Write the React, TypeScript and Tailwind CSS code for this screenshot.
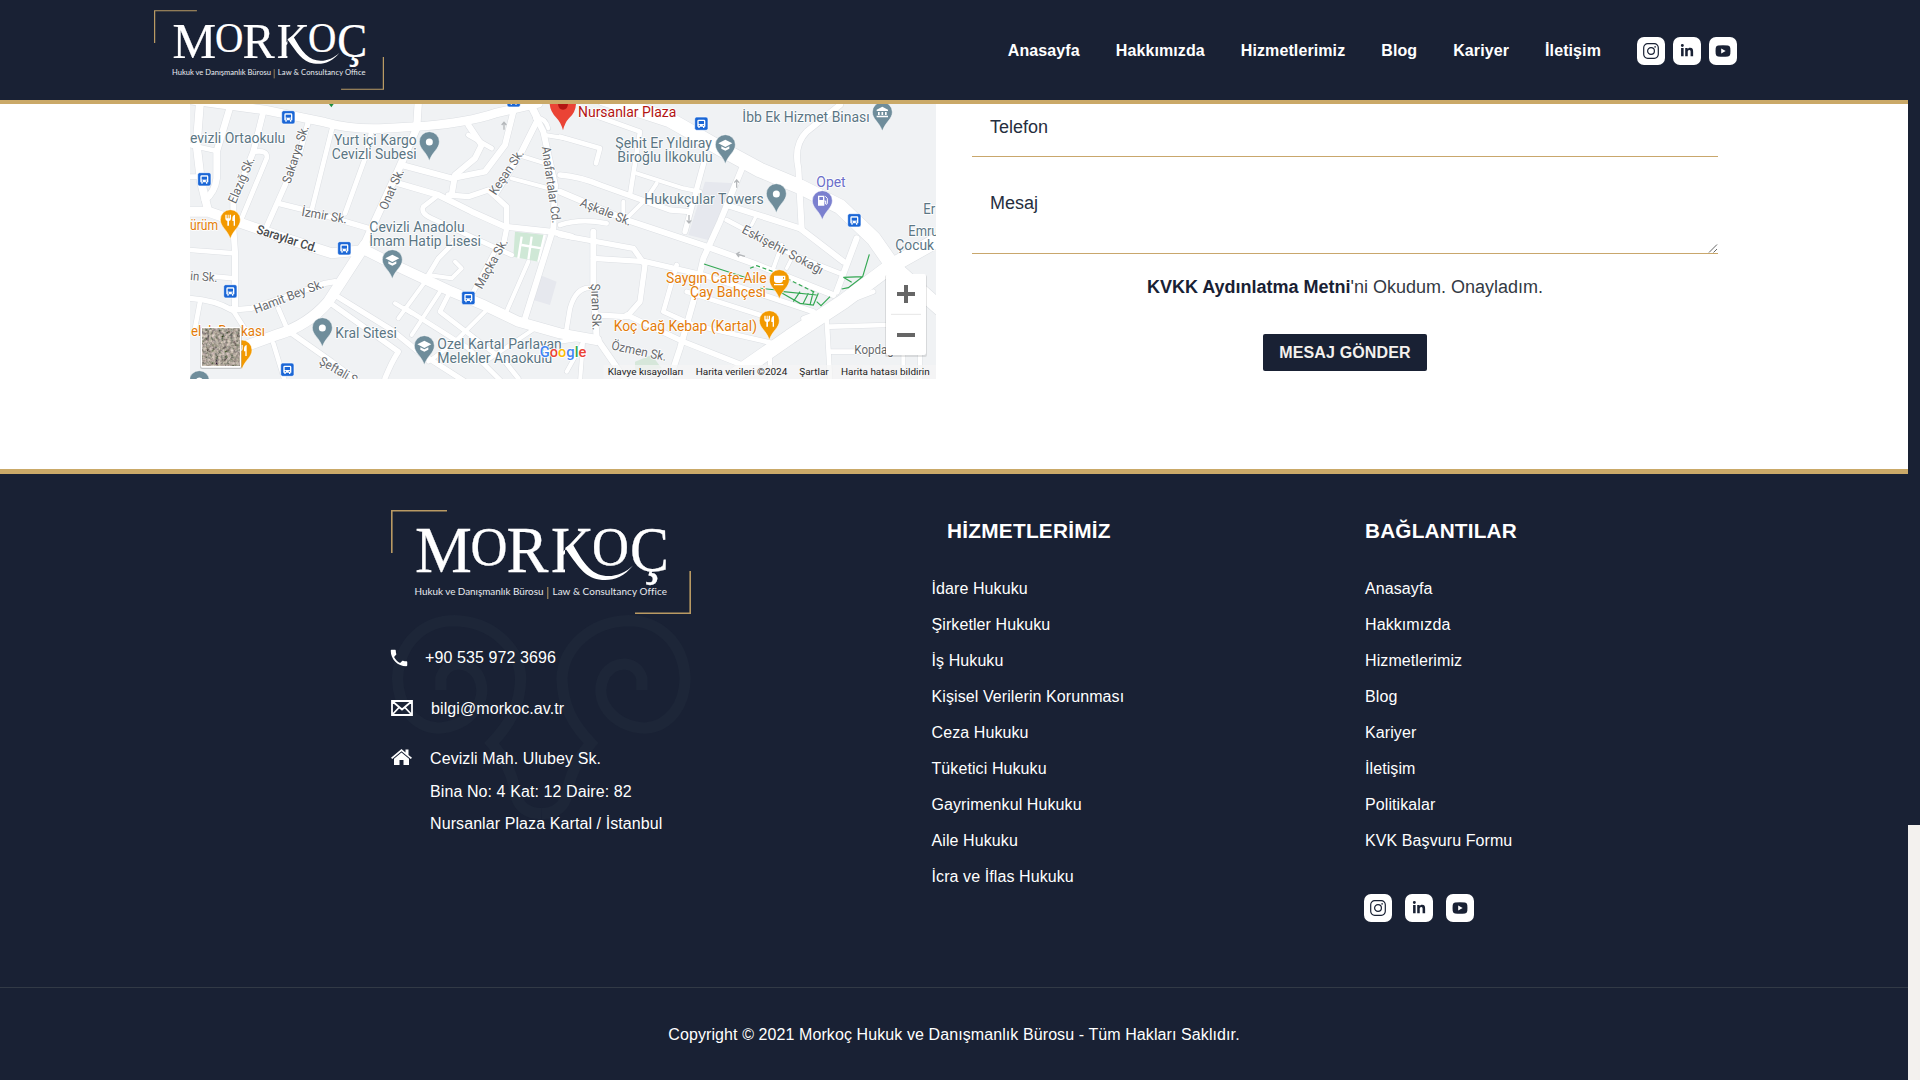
import React from "react";
import { FaLinkedinIn } from "react-icons/fa";
import { MdPhone } from "react-icons/md";

const navItems = ["Anasayfa", "Hakkımızda", "Hizmetlerimiz", "Blog", "Kariyer", "İletişim"];

const services = [
  "İdare Hukuku",
  "Şirketler Hukuku",
  "İş Hukuku",
  "Kişisel Verilerin Korunması",
  "Ceza Hukuku",
  "Tüketici Hukuku",
  "Gayrimenkul Hukuku",
  "Aile Hukuku",
  "İcra ve İflas Hukuku",
];

const links = ["Anasayfa", "Hakkımızda", "Hizmetlerimiz", "Blog", "Kariyer", "İletişim", "Politikalar", "KVK Başvuru Formu"];

function Logo({ className, id }: { className: string; id: string }) {
  const serif = { fontFamily: '"Liberation Serif", serif', fill: "#fff", stroke: "#fff", strokeWidth: 0.3 };
  const sans = { fontFamily: "Lato, sans-serif", fill: "#e8ebf0", fontSize: 9.9 };
  return (
    <svg viewBox="0 0 300 104" className={className} aria-label="Morkoç">
      <defs>
        <clipPath id={id}>
          <path d="M150 0H240V36L183 36L174 40V70H150Z" />
        </clipPath>
      </defs>
      <path d="M56 .8H.8V43M299.2 61V103.2H244" fill="none" stroke="#b99a63" strokeWidth="1.6" />
      <g {...serif}>
        <text x="24" y="62" fontSize="66" textLength="57" lengthAdjust="spacingAndGlyphs">M</text>
        <text x="79.500" y="54.500" fontSize="55" textLength="37" lengthAdjust="spacingAndGlyphs">O</text>
        <text x="115.500" y="62" fontSize="66" textLength="42" lengthAdjust="spacingAndGlyphs">R</text>
        <g clipPath={`url(#${id})`}>
          <text x="160" y="62" fontSize="66" textLength="43" lengthAdjust="spacingAndGlyphs">K</text>
        </g>
        <text x="201" y="54.500" fontSize="55" textLength="37" lengthAdjust="spacingAndGlyphs">O</text>
        <text x="239" y="61" fontSize="64" textLength="39" lengthAdjust="spacingAndGlyphs">Ç</text>
      </g>
      <path d="M174 38L181 33C187 43 191 51 198 58C211 71 230 67 242 55.500C232 68 220 71.500 208 69.500C193 67 187 56 174 38Z" fill="#fff" />
      <text x="23.500" y="84.800" textLength="129" {...sans}>Hukuk ve Danışmanlık Bürosu</text>
      <path d="M156.800 77V89" stroke="#b99a63" strokeWidth="1" />
      <text x="161.500" y="84.800" textLength="114.500" {...sans}>Law &amp; Consultancy Office</text>
    </svg>
  );
}

function Socials({ className }: { className: string }) {
  return (
    <div className={`flex ${className}`}>
      <a className="flex size-7 items-center justify-center rounded-[7px] bg-white">
        <svg viewBox="0 0 16 16" className="size-4" fill="none" stroke="#192134">
          <rect x=".7" y=".7" width="14.600" height="14.600" rx="4" strokeWidth="1.200" />
          <circle cx="8" cy="8" r="3.400" strokeWidth="1.200" />
          <circle cx="12.100" cy="3.900" r=".8" fill="#192134" stroke="none" />
        </svg>
      </a>
      <a className="flex size-7 items-center justify-center rounded-[7px] bg-white">
        <FaLinkedinIn className="size-[14px] text-[#192134]" />
      </a>
      <a className="flex size-7 items-center justify-center rounded-[7px] bg-white">
        <svg viewBox="0 0 16 12" className="h-3 w-4">
          <path d="M3 .6Q8 .1 13 .6Q15 .8 15.300 3Q15.600 6 15.300 9Q15 11.200 13 11.400Q8 11.900 3 11.400Q1 11.200.7 9Q.4 6 .7 3Q1 .8 3 .6Z" fill="#192134" />
          <path d="M6.200 3.400L10.700 6L6.200 8.600Z" fill="#fff" />
        </svg>
      </a>
    </div>
  );
}

/* Streets as [path, width]; both halves of the map share one scale of three units per pixel. */
const streets: [string, number][] = [
  ["M45 20L35 150L48 260L70 350", 24],
  ["M140 20L95 170V250Q90 290 60 315", 20],
  ["M15 150L95 168M15 245H60", 14],
  ["M235 50L205 170L145 320V400L150 470V640", 18],
  ["M210 170Q250 165 245 190L170 370", 14],
  ["M370 80L345 170L245 395", 16],
  ["M445 85L380 345", 14],
  ["M560 105L540 190L480 355", 14],
  ["M280 325L380 350L550 400", 16],
  ["M700 20L695 100L640 225L530 465", 22],
  ["M15 465L150 475M90 545L150 550", 14],
  ["M15 610Q90 615 140 645L200 640Q320 600 420 565L450 560", 16],
  ["M140 640L185 710M45 620L30 700", 14],
  ["M280 640L310 710", 14],
  ["M430 620L640 770Q620 800 600 850", 16],
  ["M450 600L620 705L700 770L840 860", 16],
  ["M320 715L440 800L520 860", 16],
  ["M265 745L300 860", 14],
  ["M650 210L800 250L900 230L960 150L985 50", 18],
  ["M640 265L760 300L860 350L960 395L1100 410L1160 425", 18],
  ["M850 90L890 150L870 190L810 240L800 300", 18],
  ["M850 120L920 160", 14],
  ["M760 300L715 335Q705 355 740 370L870 430L980 480", 14],
  ["M790 300L850 305L910 285L965 335V400L955 450", 16],
  ["M1040 30L1060 70L1010 170L930 300", 18],
  ["M1040 40L1075 110L1110 270L1105 400L1020 670", 18],
  ["M1050 70Q1080 65 1090 100M1080 120L1140 130", 12],
  ["M1000 180L1080 205M980 250L1110 285", 12],
  ["M735 540L640 670M630 625L680 655M765 590L680 720", 12],
  ["M810 440L760 490L730 540", 14],
  ["M730 540L800 550L830 520L810 500", 12],
  ["M860 600L940 450", 14],
  ["M660 640L850 760L950 860", 14],
  ["M790 600L765 650L850 715L960 800L1000 850", 14],
  ["M910 640L800 750L730 800M1050 700L900 800", 12],
  ["M1030 500L960 660", 12],
];

const streetsEast: [string, number][] = [
  ["M0 125L120 160L108 205", 14],
  ["M100 60L240 110L210 300", 14],
  ["M0 240Q60 245 120 270L330 345L390 350", 16],
  ["M230 235L370 280L420 290", 12],
  ["M0 290L200 375L440 455L580 505L820 600", 18],
  ["M435 190L375 410", 16],
  ["M550 210L480 380L430 490L400 620L360 760L330 850", 18],
  ["M290 265L260 310L200 370M190 320V360", 12],
  ["M500 330L720 400L850 500", 18],
  ["M500 375L700 480L840 535", 14],
  ["M725 400L715 220Q700 150 740 110L840 30", 18],
  ["M890 430L830 590", 18],
  ["M665 450L640 520", 12],
  ["M0 390Q60 370 140 385", 14],
  ["M100 410V580L110 730L200 860", 18],
  ["M0 420L220 460L255 510L240 620L200 665L110 660", 16],
  ["M100 490L255 500L430 540L760 650", 16],
  ["M100 580Q50 570 30 640L15 730", 14],
  ["M350 510L310 650L400 690L640 745", 14],
  ["M200 660L370 740L560 815", 16],
  ["M380 590L600 660", 14],
  ["M700 480L680 520M590 360L575 390", 10],
  ["M800 670L810 850M810 695L980 690M810 770H980", 14],
  ["M630 780V850M1080 740V850M1030 770V850", 12],
  ["M730 670L940 590", 14],
  ["M0 740L70 730L60 860M70 740L20 830", 12],
];

const avenues: [string, number][] = [
  ["M15 15L240 45L420 82Q500 105 600 100L720 93Q850 82 930 55L1060 25", 26],
  ["M15 350L70 350L170 385L300 430L440 475L540 465L640 515L800 590L900 632L1000 680L1125 715L1235 735", 30],
  ["M540 450L430 620Q370 690 280 718L150 765", 32],
];

const avenuesEast: [string, number][] = [
  ["M130 10L330 75L480 160L600 225L720 275L840 335L940 430L1000 515L1140 640", 44],
  ["M510 850L690 725L850 620L990 515L1150 425", 44],
];

function Roads({ list, color, extra }: { list: [string, number][]; color: string; extra: number }) {
  return (
    <g fill="none" stroke={color} strokeLinejoin="round" strokeLinecap="round">
      {list.map(([d, w]) => (
        <path key={d} d={d} strokeWidth={w + extra} />
      ))}
    </g>
  );
}

function Bus({ x, y }: { x: number; y: number }) {
  return (
    <g transform={`translate(${x} ${y})`}>
      <rect x="-20" y="-20" width="40" height="40" rx="6" fill="#1a66d6" stroke="#fff" strokeWidth="2" />
      <path d="M-12 -8Q-12 -12 -8 -12H8Q12 -12 12 -8V9H9V13H5V9H-5V13H-9V9H-12Z" fill="#fff" />
      <rect x="-8" y="-8" width="16" height="9" fill="#1a66d6" />
      <circle cx="-6" cy="5" r="2" fill="#1a66d6" />
      <circle cx="6" cy="5" r="2" fill="#1a66d6" />
    </g>
  );
}

function Pin({ x, y, color = "#6f8d9b", kind = "dot" }: { x: number; y: number; color?: string; kind?: string }) {
  return (
    <g transform={`translate(${x} ${y})`}>
      <path d="M0 -31A30 30 0 0 1 30 -1C30 20 10 28 0 56C-10 28 -30 20 -30 -1A30 30 0 0 1 0 -31Z" fill={color} stroke="#fff" strokeWidth="1.500" />
      {kind === "dot" && <circle r="10.500" fill="#fff" />}
      {kind === "school" && <path d="M0 -16L21 -5L0 6L-21 -5ZM-12 4L0 10L12 4V11L0 17L-12 11Z" fill="#fff" />}
      {kind === "food" && (
        <path d="M-15 -16V-4Q-15 2 -9 3V17H-4V3Q2 2 2 -4V-16H-2V-5H-5V-16H-8V-5H-11V-16ZM14 -16Q6 -14 6 -4V3H10V17H14Z" fill="#fff" />
      )}
      {kind === "cafe" && <path d="M-16 -13H18V0H11Q10 9 2 9H-8Q-16 8 -16 0ZM11 -9V-4H14V-9ZM-16 12H12V16H-16Z" fill="#fff" fillRule="evenodd" />}
      {kind === "bank" && <path d="M0 -17L17 -8V-4H-17V-8ZM-13 -1H-8V8H-13ZM-2.500 -1H2.500V8H-2.500ZM8 -1H13V8H8ZM-17 10H17V15H-17Z" fill="#fff" />}
      {kind === "fuel" && (
        <g>
          <path d="M-13 -16H6V14H-13ZM-9 -12V-3H2V-12Z" fill="#fff" fillRule="evenodd" />
          <path d="M6 0H10V9Q14 12 15 7V-8L9 -14" fill="none" stroke="#fff" strokeWidth="3" />
        </g>
      )}
    </g>
  );
}

type LabelProps = { x: number; y: number; w: number; t: string; c?: string; s?: number; r?: number; bold?: boolean };

/* Place label: (x, y) is the start of the baseline, w its drawn length, r its slope in degrees. */
function Label({ x, y, w, t, c = "#5b7684", s = 42, r = 0, bold = false }: LabelProps) {
  return (
    <text
      transform={`translate(${x} ${y}) rotate(${r})`}
      textLength={w}
      lengthAdjust="spacingAndGlyphs"
      fontSize={s}
      fill={c}
      fontWeight={bold ? 500 : 400}
      stroke="#fff"
      strokeWidth="5"
      strokeLinejoin="round"
      paintOrder="stroke"
    >
      {t}
    </text>
  );
}

const gray = "#66696d";
const orange = "#e37c0a";

function MapView() {
  return (
    <svg viewBox="15 27 2238 825" className="block h-[275px] w-[746px]" style={{ fontFamily: "Roboto, sans-serif" }}>
      <defs>
        <filter id="terrain" x="0" y="0" width="100%" height="100%">
          <feTurbulence type="fractalNoise" baseFrequency=".11" numOctaves="3" seed="4" />
          <feColorMatrix values="1.3 0 0 0 -.2  1.1 .15 0 0 -.22  1 0 .1 0 -.2  0 0 0 0 1" />
        </filter>
      </defs>
      <rect x="15" y="27" width="2238" height="825" fill="#f0f2f4" />
      <path d="M1560 260L1650 265L1640 300L1590 440L1510 420Z" fill="#e6e8ee" />
      <path d="M1065 540L1115 560L1095 630L1045 615Z" fill="#e6e8ee" />
      <path d="M990 410L1080 420L1060 500L985 485Z" fill="#cfe8d6" />
      <path d="M1010 425L1000 490M1010 450L1070 460M1040 425L1030 495M1080 415L1060 500" stroke="#fff" strokeWidth="7" fill="none" />
      <path d="M1350 800L1400 780L1430 820L1350 830Z" fill="#d6e7da" />

      <Roads list={streets} color="#dcdfe3" extra={3} />
      <g transform="translate(1125 0)">
        <Roads list={streetsEast} color="#dcdfe3" extra={3} />
        <Roads list={avenuesEast} color="#dcdfe3" extra={3} />
      </g>
      <Roads list={avenues} color="#dcdfe3" extra={3} />
      <Roads list={streets} color="#fff" extra={0} />
      <Roads list={avenues} color="#fff" extra={0} />
      <g transform="translate(1125 0)">
        <Roads list={streetsEast} color="#fff" extra={0} />
        <Roads list={avenuesEast} color="#fff" extra={0} />
      </g>
      <g stroke="#b4b7ba" strokeWidth="4" fill="none">
        <path d="M957 104V82M950 90L957 82L964 90" />
        <path d="M1655 278V255M1648 263L1655 255L1662 263M1512 360V384M1505 376L1512 384L1519 376M1680 484L1655 477M1664 471L1655 477L1662 486" />
      </g>
      <path d="M432 27H446L439 37Z" fill="#1e8e3e" />
      <g transform="translate(1125 0)" fill="none" stroke="#34a853" strokeWidth="3.500">
        <path d="M432 507L580 555M600 580L650 585L720 625L760 630L775 595M670 590L770 600M720 590L700 620M745 595L730 625M760 590L750 630M770 620L783 632L810 605M845 582L865 578L908 545L928 478M850 547L908 545M850 547L875 562" />
        <path d="M570 520L590 512L640 530L770 595" strokeDasharray="12 8" />
      </g>

      <Bus x={310} y={67} />
      <Bus x={58} y={253} />
      <Bus x={478} y={460} />
      <Bus x={136} y={589} />
      <Bus x={850} y={609} />
      <Bus x={307} y={824} />
      <Bus x={986} y={16} />
      <Bus x={1549} y={86} />
      <Bus x={2008} y={376} />

      <Label x={152} y={328} w={147} t="Elazığ Sk." c={gray} s={38} r={-67} />
      <Label x={316} y={268} w={180} t="Sakarya Sk." c={gray} s={38} r={-72} />
      <Label x={605} y={347} w={130} t="Onat Sk." c={gray} s={38} r={-66} />
      <Label x={348} y={362} w={138} t="İzmir Sk." c={gray} s={38} r={10} />
      <Label x={212} y={414} w={190} t="Saraylar Cd." c="#474a4d" s={38} r={18} bold />
      <Label x={15} y={555} w={82} t="in Sk." c={gray} s={38} r={4} />
      <Label x={212} y={656} w={222} t="Hamit Bey Sk." c={gray} s={38} r={-21} />
      <Label x={932} y={302} w={154} t="Keşan Sk." c={gray} s={38} r={-56} />
      <Label x={1070} y={156} w={232} t="Anafartalar Cd." c={gray} s={38} r={82} />
      <Label x={890} y={584} w={164} t="Maçka Sk." c={gray} s={38} r={-61} />
      <Label x={400} y={806} w={125} t="Şeftali S" c={gray} s={38} r={30} />
      <Label x={1183} y={332} w={162} t="Aşkale Sk." c={gray} s={38} r={22} />
      <Label x={1668} y={412} w={270} t="Eskişehir Sokağı" c={gray} s={38} r={28} />
      <Label x={1218} y={566} w={140} t="Şıran Sk." c={gray} s={38} r={88} />
      <Label x={1277} y={763} w={168} t="Özmen Sk." c={gray} s={38} r={12} />
      <Label x={2008} y={778} w={118} t="Kopdağ" c={gray} s={37} />

      <Label x={15} y={144} w={286} t="evizli Ortaokulu" />
      <Label x={447} y={150} w={248} t="Yurt içi Kargo" />
      <Label x={440} y={192} w={255} t="Cevizli Subesi" />
      <Label x={553} y={411} w={286} t="Cevizli Anadolu" />
      <Label x={553} y={453} w={335} t="İmam Hatip Lisesi" />
      <Label x={451} y={729} w={185} t="Kral Sitesi" />
      <Label x={757} y={762} w={373} t="Ozel Kartal Parlayan" />
      <Label x={757} y={804} w={345} t="Melekler Anaokulu" />
      <Label x={15} y={405} w={84} t="ürüm" c={orange} />
      <Label x={18} y={723} w={222} t="elek Bankası" c={orange} />
      <Label x={1179} y={65} w={295} t="Nursanlar Plaza" c="#b31412" />
      <Label x={1672} y={81} w={382} t="İbb Ek Hizmet Binası" />
      <Label x={1291} y={159} w={290} t="Şehit Er Yıldıray" />
      <Label x={1297} y={201} w={286} t="Biroğlu İlkokulu" />
      <Label x={1378} y={327} w={358} t="Hukukçular Towers" />
      <Label x={1894} y={277} w={88} t="Opet" c="#6b6fc9" />
      <Label x={2215} y={357} w={36} t="Er" />
      <Label x={2170} y={423} w={90} t="Emru" />
      <Label x={2131} y={465} w={116} t="Çocuk" />
      <Label x={1443} y={564} w={302} t="Saygın Cafe-Aile" c={orange} />
      <Label x={1515} y={606} w={228} t="Çay Bahçesi" c={orange} />
      <Label x={1286} y={708} w={430} t="Koç Cağ Kebap (Kartal)" c={orange} />

      <Pin x={733} y={141} />
      <Pin x={622} y={495} kind="school" />
      <Pin x={412} y={699} />
      <Pin x={718} y={753} kind="school" />
      <Pin x={136} y={375} color="#f29900" kind="food" />
      <Pin x={171} y={766} color="#f29900" kind="food" />
      <Pin x={43} y={858} />
      <Pin x={1621} y={150} kind="school" />
      <Pin x={1774} y={297} />
      <Pin x={2092} y={52} kind="bank" />
      <Pin x={1912} y={318} color="#7b80cf" kind="fuel" />
      <Pin x={1783} y={555} color="#f29900" kind="cafe" />
      <Pin x={1753} y={678} color="#f29900" kind="food" />
      <path d="M1094 27H1173Q1172 52 1152 70Q1140 82 1134 106Q1128 82 1114 68Q1096 50 1094 27Z" fill="#ea4335" />
      <path d="M1119 27Q1120 44 1134 44Q1148 44 1149 27Z" fill="#b31412" />

      <rect x="45" y="696" width="126" height="126" rx="6" fill="#000" opacity=".18" />
      <rect x="47" y="696" width="122" height="122" rx="5" fill="#fff" />
      <rect x="52" y="701" width="112" height="112" fill="#776d62" />
      <rect x="52" y="701" width="112" height="112" filter="url(#terrain)" opacity=".85" />

      <text x="1064" y="786" fontSize="46" fontWeight="500" textLength="140" stroke="#fff" strokeWidth="5" paintOrder="stroke" lengthAdjust="spacingAndGlyphs">
        <tspan fill="#4285f4">G</tspan>
        <tspan fill="#ea4335">o</tspan>
        <tspan fill="#fbbc04">o</tspan>
        <tspan fill="#4285f4">g</tspan>
        <tspan fill="#34a853">l</tspan>
        <tspan fill="#ea4335">e</tspan>
      </text>

      <rect x="2100" y="540" width="126" height="246" rx="6" fill="#000" opacity=".1" />
      <rect x="2103" y="537" width="120" height="243" rx="6" fill="#fff" />
      <path d="M2118 658H2208" stroke="#e6e6e6" strokeWidth="3" />
      <path d="M2136 597H2190M2163 570V624M2136 720H2190" stroke="#666" strokeWidth="12" />

      <rect x="1255" y="810" width="998" height="42" fill="#f5f5f5" opacity=".7" />
      <g fontSize="29" fill="#222">
        <text x="1268" y="840" textLength="227" lengthAdjust="spacingAndGlyphs">Klavye kısayolları</text>
        <text x="1532" y="840" textLength="275" lengthAdjust="spacingAndGlyphs">Harita verileri ©2024</text>
        <text x="1843" y="840" textLength="88" lengthAdjust="spacingAndGlyphs">Şartlar</text>
        <text x="1968" y="840" textLength="266" lengthAdjust="spacingAndGlyphs">Harita hatası bildirin</text>
      </g>
    </svg>
  );
}

const spiral =
  "M816 240V205C800 150 735 150 705 195C665 270 730 352 825 355C900 350 945 285 946 205C940 90 860 32 775 32C665 35 580 110 576 205C578 290 610 345 663 400C625 445 600 490 592 550Q580 610 514 612";

function Spirals() {
  return (
    <svg viewBox="60 0 906 640" className="absolute top-[100px] -left-px h-[213px] w-[302px]" fill="none" stroke="#1d2638" strokeWidth="34">
      <path d={spiral} />
      <path transform="translate(1028 0) scale(-1 1)" d={spiral} />
    </svg>
  );
}

export default function App() {
  return (
    <div
      className="flex h-[1080px] w-[1920px] overflow-hidden bg-white text-base leading-6"
      style={{ fontFamily: '"Liberation Sans", Arial, sans-serif' }}
    >
      <div className="flex w-[1908px] flex-col">
        <header className="flex h-[104px] shrink-0 items-start border-b-4 border-[#caa968] bg-[#192134] pr-[171px] pl-[154px]">
          <Logo id="k-top" className="mt-[10px] h-20 w-[230px]" />
          <nav className="ml-auto flex h-[101px] items-center gap-9 font-bold tracking-[.1px] text-white">
            {navItems.map((n) => (
              <a key={n}>{n}</a>
            ))}
            <Socials className="gap-2" />
          </nav>
        </header>

        <main className="flex h-[365px] shrink-0 gap-9 pl-[190px]">
          <MapView />
          <form className="flex w-[746px] flex-col items-center text-lg text-[#262e3e]">
            <div className="h-[53px] w-full border-b border-[#c9a76c] px-[18px] pt-[10px] leading-[27px]">Telefon</div>
            <div className="relative mt-6 h-[73px] w-full border-b border-[#c9a76c] px-[18px] pt-[9px] leading-[27px]">
              Mesaj
              <svg viewBox="0 0 10 10" className="absolute right-0 bottom-0 size-[10px]" stroke="#666" strokeWidth="1">
                <path d="M1 9.500L9 1.500M5.500 9.500L9 6" />
              </svg>
            </div>
            <p className="mt-5 leading-[27px] text-[#333a44]">
              <b className="text-[#192134]">KVKK Aydınlatma Metni</b>'ni Okudum. Onayladım.
            </p>
            <button type="button" className="mt-[33px] h-[37px] w-[164px] rounded-[2px] bg-[#192134] text-base font-bold tracking-[.15px] text-[#f4f1ee]">
              MESAJ GÖNDER
            </button>
          </form>
        </main>

        <footer className="flex grow flex-col border-t-[5px] border-[#caa968] bg-[#192134] tracking-[.09px] text-white">
          <div className="flex h-[514px] shrink-0 border-b border-[#323a46] pt-9 pl-[391px]">
            <div className="relative w-[540.5px]">
              <Spirals />
              <Logo id="k-bottom" className="relative h-[104px] w-[300px]" />
              <div className="relative mt-8 flex h-6 items-center">
                <MdPhone className="-ml-[3px] size-[22px]" />
                <span className="ml-[15px]">+90 535 972 3696</span>
              </div>
              <div className="relative mt-[27px] flex h-6 items-center">
                <svg viewBox="0 0 22 16" className="-mt-[2px] h-4 w-[22px]" fill="none" stroke="#fff" strokeWidth="1.800">
                  <path d="M1 1H21V15H1ZM1 1L11 9.500L21 1M1 15L8 7.500M21 15L14 7.500" />
                </svg>
                <span className="ml-[18px]">bilgi@morkoc.av.tr</span>
              </div>
              <div className="relative mt-[21px] flex items-start">
                <svg viewBox="0 0 21 16" className="mt-[7px] h-4 w-[21px]" fill="#fff">
                  <path d="M10.500 0L14.500 3.400V.6H17.500V6L21 8.800L19.800 10L10.500 2.300L1.200 10L0 8.800Z" />
                  <path d="M10.500 3.600L18 9.800V16H12.500V11H8.500V16H3V9.800Z" />
                </svg>
                <address className="ml-[18px] pt-px leading-[32.500px] not-italic">
                  Cevizli Mah. Ulubey Sk.
                  <br />
                  Bina No: 4 Kat: 12 Daire: 82
                  <br />
                  Nursanlar Plaza Kartal / İstanbul
                </address>
              </div>
            </div>
            <div className="w-[433.5px] pt-[9px]">
              <h2 className="pl-[15.500px] text-[20.800px] leading-6 font-bold tracking-[.25px]">HİZMETLERİMİZ</h2>
              <ul className="mt-[34px] flex flex-col gap-3">
                {services.map((s) => (
                  <li key={s}>{s}</li>
                ))}
              </ul>
            </div>
            <div className="pt-[9px]">
              <h2 className="text-[20.800px] leading-6 font-bold tracking-[.15px]">BAĞLANTILAR</h2>
              <ul className="mt-[34px] flex flex-col gap-3">
                {links.map((s) => (
                  <li key={s}>{s}</li>
                ))}
              </ul>
              <Socials className="mt-[41px] -ml-px gap-[13px]" />
            </div>
          </div>
          <p className="mt-[35px] text-center">Copyright © 2021 Morkoç Hukuk ve Danışmanlık Bürosu - Tüm Hakları Saklıdır.</p>
        </footer>
      </div>

      <div className="flex w-3 flex-col bg-[#f3f1ee]">
        <div className="h-[825px] bg-[#192134]" />
      </div>
    </div>
  );
}
